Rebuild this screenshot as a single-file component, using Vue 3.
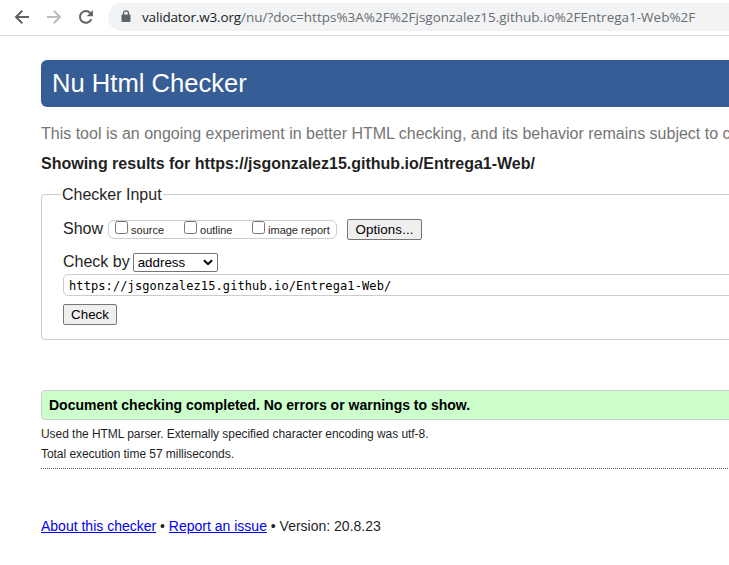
<script setup>
import { ref } from 'vue'

const address = ref('https://jsgonzalez15.github.io/Entrega1-Web/')
const options = ['source', 'outline', 'image report']
</script>

<template>
  <div class="window">
    <header class="toolbar">
      <svg class="nav" viewBox="0 0 16 16"><path d="M15 8H2.2M8.2 1.8 2 8l6.2 6.2" /></svg>
      <svg class="nav forward" viewBox="0 0 16 16"><path d="M1 8h12.8M7.8 1.8 14 8l-6.2 6.2" /></svg>
      <svg class="nav reload" viewBox="0 0 16 16">
        <path d="M13.3 10.2A5.9 5.9 0 1 1 12.3 4" />
        <path class="solid" d="M14.9 1v6.2H8.7z" />
      </svg>
      <div class="omnibox">
        <svg class="lock" viewBox="0 0 10 13">
          <path class="shackle" d="M2.5 5V3.3a2.5 2.5 0 0 1 5 0V5" />
          <rect x="0.5" y="4.5" width="9" height="7.5" rx="1" />
        </svg>
        <span class="url"><b>validator.w3.org</b>/nu/?doc=https%3A%2F%2Fjsgonzalez15.github.io%2FEntrega1-Web%2F</span>
      </div>
    </header>

    <main class="page">
      <h1 class="banner">Nu Html Checker</h1>
      <p class="notice">This tool is an ongoing experiment in better HTML checking, and its behavior remains subject to change</p>
      <h2 class="results">Showing results for https://jsgonzalez15.github.io/Entrega1-Web/</h2>

      <form class="panel" @submit.prevent>
        <div class="legend">Checker Input</div>
        <div class="row show-row">
          <span class="label">Show</span>
          <div class="checks">
            <label v-for="name in options" :key="name" class="check">
              <input type="checkbox" class="box" /><span>{{ name }}</span>
            </label>
          </div>
          <button type="button" class="btn options">Options...</button>
        </div>
        <div class="row by-row">
          <span class="label">Check by</span>
          <div class="select">
            <span>address</span>
            <svg class="chevron" viewBox="0 0 10 7"><path d="M1 1.2 5 5.2l4-4" /></svg>
          </div>
        </div>
        <input v-model="address" class="address" type="text" spellcheck="false" />
        <button type="submit" class="btn submit">Check</button>
      </form>

      <p class="success">Document checking completed. No errors or warnings to show.</p>
      <div class="details">
        <p>Used the HTML parser. Externally specified character encoding was utf-8.</p>
        <p>Total execution time 57 milliseconds.</p>
      </div>
      <footer class="about"><a href="#">About this checker</a> • <a href="#">Report an issue</a> • Version: 20.8.23</footer>
    </main>
  </div>
</template>

<style>
body {
  background: #fff;
  overflow: hidden;
}
</style>

<style scoped>
* {
  box-sizing: border-box;
}
.window {
  width: 100vw;
  height: 565px;
  overflow: hidden;
  background: #fff;
  color: #1f1f1f;
  font-family: "Liberation Sans", Arial, sans-serif;
  font-size: 16px;
}
h1, h2, p {
  margin: 0;
}
.toolbar {
  display: flex;
  align-items: center;
  height: 36px;
  padding: 0 0 2px 14px;
  border-bottom: 1px solid #dadce0;
}
.nav {
  flex: none;
  width: 16px;
  height: 16px;
  margin-right: 16px;
  fill: none;
  stroke: #5f6368;
  stroke-width: 2;
}
.forward {
  stroke: #babcbe;
}
.reload {
  margin-right: 14px;
}
.solid {
  fill: #5f6368;
  stroke: none;
}
.omnibox {
  display: flex;
  align-items: center;
  flex: 1;
  height: 28px;
  padding-left: 13px;
  border-radius: 14px 0 0 14px;
  background: #f1f3f4;
}
.lock {
  flex: none;
  width: 10px;
  height: 13px;
  margin-right: 11px;
  fill: #5f6368;
}
.shackle {
  fill: none;
  stroke: #5f6368;
  stroke-width: 1.3;
}
.url {
  white-space: nowrap;
  color: #696c70;
  font-family: "Open Sans", "Noto Sans", sans-serif;
  font-size: 13.5px;
}
.url b {
  color: #202124;
  font-weight: 400;
  letter-spacing: -0.16px;
}
.page {
  width: 900px;
  padding: 24px 0 0 41px;
}
.banner {
  height: 47px;
  padding-left: 11px;
  border-radius: 6px;
  background: #365d95;
  color: #fff;
  font-size: 25.6px;
  font-weight: 400;
  line-height: 46px;
}
.notice {
  margin-top: 17px;
  line-height: 20px;
  color: #757575;
  white-space: nowrap;
}
.results {
  margin-top: 10px;
  font-size: 16px;
  line-height: 20px;
}
.panel {
  display: flex;
  flex-direction: column;
  align-items: flex-start;
  height: 146px;
  margin-top: 20px;
  padding-left: 21px;
  border: 1px solid #ccc;
  border-radius: 4px;
}
.legend {
  height: 20px;
  margin: -10px 0 0 -2px;
  padding: 0 1px;
  background: #fff;
  line-height: 20px;
}
.row {
  display: flex;
  align-items: center;
}
.show-row {
  height: 21px;
  margin-top: 14px;
}
.label {
  line-height: 20px;
  margin-top: -2px;
}
.by-row .label {
  margin-top: 0;
}
.checks {
  display: grid;
  grid-template-columns: 69px 68px 78px;
  width: 229px;
  height: 19px;
  margin-left: 5px;
  padding-left: 6px;
  border: 1px solid #ccc;
  border-radius: 6px;
}
.check {
  display: flex;
  font-size: 11px;
  line-height: 19px;
  white-space: nowrap;
}
.box {
  flex: none;
  appearance: none;
  width: 13px;
  height: 13px;
  margin: 0 3px 0 0;
  border: 1px solid #767676;
  border-radius: 2.5px;
  background: #fff;
}
.btn {
  height: 21px;
  padding: 0;
  border: 1px solid #767676;
  border-radius: 2px;
  background: #efefef;
  color: #000;
  font: 13.33px/19px "Liberation Sans", Arial, sans-serif;
}
.options {
  width: 75px;
  margin-left: 10px;
  letter-spacing: 0.1px;
}
.by-row {
  height: 20px;
  margin-top: 12px;
}
.select {
  display: flex;
  align-items: center;
  justify-content: space-between;
  width: 85px;
  height: 19px;
  margin-left: 3px;
  padding: 0 4px;
  border: 1px solid #767676;
  border-radius: 2px;
  color: #000;
  font-size: 13.33px;
}
.chevron {
  width: 10px;
  height: 7px;
  fill: none;
  stroke: #000;
  stroke-width: 2;
}
.address {
  width: 820px;
  height: 22px;
  margin-top: 2px;
  padding: 2px 5px 0;
  border: 1px solid #ccc;
  border-radius: 5px;
  color: #000;
  font-family: "DejaVu Sans Mono", monospace;
  font-size: 12px;
  letter-spacing: 0.1px;
}
.submit {
  width: 54px;
  margin-top: 8px;
}
.success {
  height: 30px;
  margin-top: 50px;
  padding-left: 7px;
  border: 1px solid #ccc;
  border-radius: 4px;
  background: #cfc;
  color: #000;
  font-size: 14px;
  font-weight: 700;
  line-height: 28px;
}
.details {
  height: 49px;
  padding-top: 4px;
  border-bottom: 1px dotted #555;
  font-size: 12px;
  line-height: 20px;
  letter-spacing: -0.05px;
}
.about {
  margin-top: 47px;
  font-size: 14px;
  line-height: 20px;
}
.about a {
  color: #00e;
}
</style>
